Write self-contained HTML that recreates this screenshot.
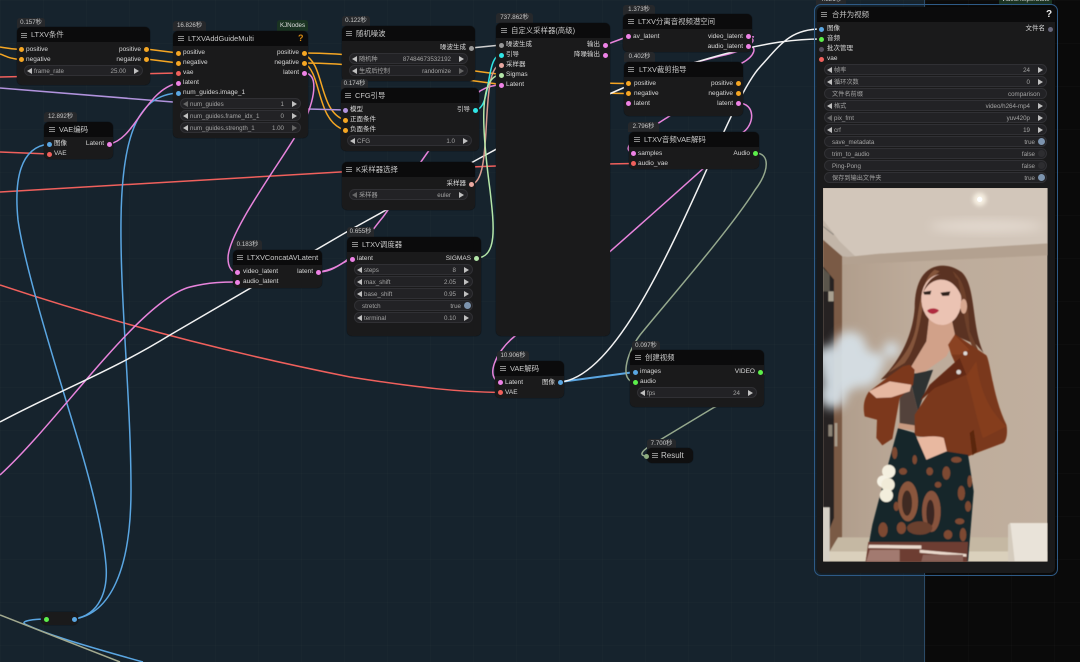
<!DOCTYPE html>
<html lang="zh"><head><meta charset="utf-8"><title>ComfyUI</title>
<style>
html,body{margin:0;padding:0;background:#16232d}
#p{position:relative;width:1080px;height:662px;overflow:hidden;background:#16232d;font-family:"Liberation Sans","Noto Sans CJK SC",sans-serif;color:#ddd;filter:blur(.3px)}
#g{position:absolute;inset:0;background-image:linear-gradient(rgba(255,255,255,.012) 1px,transparent 1px),linear-gradient(90deg,rgba(255,255,255,.012) 1px,transparent 1px);background-size:43px 43px}
#dk{position:absolute;left:924px;top:0;width:156px;height:662px;background:#0a0a0a;border-left:1px solid #2b4a66;box-sizing:border-box;background-image:linear-gradient(rgba(255,255,255,.015) 1px,transparent 1px),linear-gradient(90deg,rgba(255,255,255,.015) 1px,transparent 1px);background-size:43px 43px}
svg.wires{position:absolute;left:0;top:0}
svg.wires path{fill:none}
.n{position:absolute;background:#1a1a1b;border-radius:5px;box-shadow:0 0 1px #000}
.h{position:absolute;left:0;right:0;top:0;height:15px;background:#0b0b0c;border-radius:5px 5px 0 0}
.t{position:absolute;font-size:7.4px;line-height:15px;color:#c8c8c8;white-space:nowrap}
.m{position:absolute;width:6px;height:1px;background:#8a8a8a;box-shadow:0 2px #8a8a8a,0 4px #8a8a8a}
.b{position:absolute;background:#26282b;border-radius:3px 3px 0 0;font-size:6.2px;line-height:10px;color:#c8c8c8;text-align:center;white-space:nowrap}
.d{position:absolute;width:5px;height:5px;border-radius:50%;margin:-2.5px 0 0 -2.5px}
.l,.r{position:absolute;font-size:6.5px;line-height:10px;margin-top:-5px;color:#d8d8d8;white-space:nowrap}
.w{position:absolute;height:11px;box-sizing:border-box;background:#222225;border:1px solid #303034;border-radius:6px;font-size:6.2px;line-height:9px;color:#a4a4a4;white-space:nowrap}
.w .a{position:absolute;left:9px;top:.5px}.w .v{position:absolute;right:16px;top:.5px}.w .v0{position:absolute;right:6px;top:.5px}.w .a0{position:absolute;left:7px;top:.5px}
.w u,.w s{position:absolute;top:1.5px;width:0;height:0;border-top:3px solid transparent;border-bottom:3px solid transparent}
.w u{left:2px;border-right:5px solid #c0c0c0}.w s{right:3px;border-left:5px solid #c0c0c0}
.w u.o{border-right-color:#666}.w s.o{border-left-color:#666}
.w em{position:absolute;right:1px;top:1px;width:7px;height:7px;border-radius:50%;background:#7c93ad}
.w em.f{background:#2d2d30}
.w .v1{position:absolute;right:11px;top:.5px}
</style></head><body><div id="p">
<div id="g"></div><div id="dk"></div>

<svg class="wires" width="1080" height="662" viewBox="0 0 1080 662" stroke-width="1.5">
<g stroke="#f5a623">
<path d="M0 47 C6 48 10 49 21 49.5"/><path d="M0 54 C6 56 10 59 21 59.5"/>
<path d="M146 49 L178 53"/><path d="M146 59 L178 63"/>
<path d="M304 53 C400 53 500 83 628 83.5"/><path d="M304 63 C400 63 500 93 628 93.5"/>
<path d="M304 55 C325 62 318 112 345 120"/><path d="M304 63 C322 72 316 122 345 130"/>
</g>
<path d="M0 88 L173 102 L308 109 L345 110" stroke="#b193dd"/>
<g stroke="#f0605c">
<path d="M0 77 L178 73"/><path d="M0 152 L49 154"/><path d="M0 192 L340 172 L496 166 L633 163.5"/>
<path d="M0 285 C120 325 240 355 350 377 C420 388 460 392 500 392.5"/>
</g>
<g stroke="#5aa6e2">
<path d="M74 619 C100 615 108 590 106 565 C103 530 90 480 78 440 C60 380 25 270 18 220 C14 180 20 147 49 144"/>
<path d="M74 619 C110 614 131 570 131 490 C131 400 120 300 121 220 C122 130 140 95 178 93"/>
<path d="M46 619 C34 619 20 621 25 624 C50 636 100 650 143 662"/>
<path d="M560 382 L635 372" stroke-width="2"/>
</g>
<path d="M0 615 L120 662" stroke="#a2a98f"/>
<g stroke="#e884dc">
<path d="M109 144 C135 140 145 90 178 83"/>
<path d="M304 73 C318 73 316 95 305 120 C290 150 228 230 228 258 C228 268 232 272 237 272"/>
<path d="M0 475 C60 420 140 300 190 287 C210 282 225 282 237 282"/>
<path d="M318 272 C350 268 360 245 383 217 C410 180 445 120 480 91 C488 86 495 85 501 85"/>
<path d="M318 272 C335 272 340 262 352 259"/>
<path d="M605 45 L628 36.5"/><path d="M748 36 L754 37"/>
<path d="M748 46 C758 46 755 56 742 63 C700 92 690 102 668 117 C640 135 618 148 633 153"/>
<path d="M748 38 C760 38 750 50 720 56 L693 63"/>
<path d="M738 103 C756 103 755 125 742 133 C720 155 600 260 515 336 C495 352 485 378 500 382"/>
</g>
<g stroke="#f2f2f2">
<path d="M0 422 C60 390 110 372 170 335 L350 230 L480 158 C540 125 590 102 623 88 C680 65 740 48 780 42 C795 40 810 39 821 39"/>
<path d="M560 382 C640 375 720 110 760 67 C780 45 790 29 821 29"/>
</g>
<path d="M755 153 C770 153 770 170 755 190 C730 230 660 310 640 335 C625 355 620 382 635 382" stroke="#95a88d"/>
<path d="M760 372 C770 372 760 385 713 408 L650 446 C640 452 640 456 646 456" stroke="#95a88d"/>
<path d="M475 110 C492 110 485 55 501 55" stroke="#30e6e6"/>
<path d="M471 184 C495 184 478 65 501 65" stroke="#d99a8f"/>
<path d="M476 258 C498 258 494 225 490 190 C482 130 478 75 501 75" stroke="#b4e6a8"/>
<path d="M471 48 L501 45" stroke="#cfcfcf"/>
</svg>

<!-- LTXV条件 -->
<div class="b" style="left:17px;top:18px;width:28px;height:10px">0.157秒</div>
<div class="n" style="left:17px;top:27px;width:133px;height:58px"><div class="h"></div></div>
<div class="m" style="left:21px;top:33px"></div><div class="t" style="left:31px;top:27px">LTXV条件</div>
<i class="d" style="left:21px;top:49.5px;background:#f5a623"></i><i class="d" style="left:21px;top:59.5px;background:#f5a623"></i>
<i class="d" style="left:146px;top:49.5px;background:#f5a623"></i><i class="d" style="left:146px;top:59.5px;background:#f5a623"></i>
<span class="l" style="left:26px;top:49.5px">positive</span><span class="l" style="left:26px;top:59.5px">negative</span>
<span class="r" style="right:939px;top:49.5px">positive</span><span class="r" style="right:939px;top:59.5px">negative</span>
<div class="w" style="left:24px;top:65px;width:119px"><u></u><span class="a">frame_rate</span><span class="v">25.00</span><s></s></div>

<!-- KJNodes -->
<div style="position:absolute;left:277px;top:20px;width:31px;height:11px;background:#1a3322;border-radius:3px 3px 0 0;font-size:6.2px;line-height:11px;text-align:center;color:#ddd">KJNodes</div>
<div class="b" style="left:173px;top:21px;width:33px;height:10px">16.826秒</div>
<div class="n" style="left:173px;top:31px;width:135px;height:107px"><div class="h"></div></div>
<div class="m" style="left:178px;top:36px"></div><div class="t" style="left:188px;top:31px">LTXVAddGuideMulti</div>
<div style="position:absolute;left:298px;top:33px;font-size:9px;line-height:11px;font-weight:bold;color:#d98a10">?</div>
<i class="d" style="left:178px;top:53px;background:#f5a623"></i><i class="d" style="left:178px;top:63px;background:#f5a623"></i><i class="d" style="left:178px;top:73px;background:#f0605c"></i><i class="d" style="left:178px;top:83px;background:#ee82e6"></i><i class="d" style="left:178px;top:93px;background:#5aa6e2"></i>
<i class="d" style="left:304px;top:53px;background:#f5a623"></i><i class="d" style="left:304px;top:63px;background:#f5a623"></i><i class="d" style="left:304px;top:73px;background:#ee82e6"></i>
<span class="l" style="left:183px;top:53px">positive</span><span class="l" style="left:183px;top:63px">negative</span><span class="l" style="left:183px;top:73px">vae</span><span class="l" style="left:183px;top:83px">latent</span><span class="l" style="left:183px;top:93px">num_guides.image_1</span>
<span class="r" style="right:781px;top:53px">positive</span><span class="r" style="right:781px;top:63px">negative</span><span class="r" style="right:781px;top:73px">latent</span>
<div class="w" style="left:180px;top:98px;width:121px"><u class="o"></u><span class="a">num_guides</span><span class="v">1</span><s></s></div>
<div class="w" style="left:180px;top:110px;width:121px"><u></u><span class="a">num_guides.frame_idx_1</span><span class="v">0</span><s></s></div>
<div class="w" style="left:180px;top:122px;width:121px"><u></u><span class="a">num_guides.strength_1</span><span class="v">1.00</span><s class="o"></s></div>

<!-- VAE编码 -->
<div class="b" style="left:44px;top:112px;width:33px;height:10px">12.892秒</div>
<div class="n" style="left:44px;top:122px;width:69px;height:37px"><div class="h"></div></div>
<div class="m" style="left:49px;top:127px"></div><div class="t" style="left:59px;top:122px">VAE编码</div>
<i class="d" style="left:49px;top:144px;background:#5aa6e2"></i><i class="d" style="left:49px;top:154px;background:#f0605c"></i><i class="d" style="left:109px;top:144px;background:#ee82e6"></i>
<span class="l" style="left:54px;top:144px">图像</span><span class="l" style="left:54px;top:154px">VAE</span><span class="r" style="right:976px;top:144px">Latent</span>

<!-- 随机噪波 -->
<div class="b" style="left:342px;top:16px;width:28px;height:10px">0.122秒</div>
<div class="n" style="left:342px;top:26px;width:133px;height:55px"><div class="h"></div></div>
<div class="m" style="left:346px;top:31px"></div><div class="t" style="left:356px;top:26px">随机噪波</div>
<i class="d" style="left:471px;top:48px;background:#999"></i><span class="r" style="right:614px;top:48px">噪波生成</span>
<div class="w" style="left:349px;top:53px;width:119px"><u></u><span class="a">随机种</span><span class="v">87484673532192</span><s></s></div>
<div class="w" style="left:349px;top:65px;width:119px"><u></u><span class="a">生成后控制</span><span class="v">randomize</span><s class="o"></s></div>

<!-- CFG引导 -->
<div class="b" style="left:341px;top:79px;width:27px;height:10px">0.174秒</div>
<div class="n" style="left:341px;top:88px;width:138px;height:63px"><div class="h"></div></div>
<div class="m" style="left:345px;top:93px"></div><div class="t" style="left:355px;top:88px">CFG引导</div>
<i class="d" style="left:345px;top:110px;background:#b193dd"></i><i class="d" style="left:345px;top:120px;background:#f5a623"></i><i class="d" style="left:345px;top:130px;background:#f5a623"></i><i class="d" style="left:475px;top:110px;background:#30e6e6"></i>
<span class="l" style="left:350px;top:110px">模型</span><span class="l" style="left:350px;top:120px">正面条件</span><span class="l" style="left:350px;top:130px">负面条件</span><span class="r" style="right:610px;top:110px">引导</span>
<div class="w" style="left:347px;top:135px;width:125px"><u></u><span class="a">CFG</span><span class="v">1.0</span><s></s></div>

<!-- K采样器选择 -->
<div class="n" style="left:342px;top:162px;width:133px;height:48px"><div class="h"></div></div>
<div class="m" style="left:346px;top:167px"></div><div class="t" style="left:356px;top:162px">K采样器选择</div>
<i class="d" style="left:471px;top:184px;background:#e8a8a0"></i><span class="r" style="right:614px;top:184px">采样器</span>
<div class="w" style="left:349px;top:189px;width:119px"><u class="o"></u><span class="a">采样器</span><span class="v">euler</span><s></s></div>

<!-- LTXV调度器 -->
<div class="b" style="left:347px;top:227px;width:27px;height:10px">0.655秒</div>
<div class="n" style="left:347px;top:237px;width:134px;height:99px"><div class="h"></div></div>
<div class="m" style="left:352px;top:242px"></div><div class="t" style="left:362px;top:237px">LTXV调度器</div>
<i class="d" style="left:352px;top:259px;background:#ee82e6"></i><i class="d" style="left:476px;top:258px;background:#b4e6a8"></i>
<span class="l" style="left:357px;top:259px">latent</span><span class="r" style="right:609px;top:259px">SIGMAS</span>
<div class="w" style="left:354px;top:264px;width:119px"><u></u><span class="a">steps</span><span class="v">8</span><s></s></div>
<div class="w" style="left:354px;top:276px;width:119px"><u></u><span class="a">max_shift</span><span class="v">2.05</span><s></s></div>
<div class="w" style="left:354px;top:288px;width:119px"><u></u><span class="a">base_shift</span><span class="v">0.95</span><s></s></div>
<div class="w" style="left:354px;top:300px;width:119px"><span class="a0">stretch</span><span class="v1">true</span><em></em></div>
<div class="w" style="left:354px;top:312px;width:119px"><u></u><span class="a">terminal</span><span class="v">0.10</span><s></s></div>

<!-- 自定义采样器 -->
<div class="b" style="left:496px;top:13px;width:37px;height:10px">737.862秒</div>
<div class="n" style="left:496px;top:23px;width:114px;height:313px"><div class="h"></div></div>
<div class="m" style="left:501px;top:28px"></div><div class="t" style="left:511px;top:23px">自定义采样器(高级)</div>
<i class="d" style="left:501px;top:45px;background:#999"></i><i class="d" style="left:501px;top:55px;background:#30e6e6"></i><i class="d" style="left:501px;top:65px;background:#e8a8a0"></i><i class="d" style="left:501px;top:75px;background:#b4e6a8"></i><i class="d" style="left:501px;top:85px;background:#ee82e6"></i>
<i class="d" style="left:605px;top:45px;background:#ee82e6"></i><i class="d" style="left:605px;top:55px;background:#ee82e6"></i>
<span class="l" style="left:506px;top:45px">噪波生成</span><span class="l" style="left:506px;top:55px">引导</span><span class="l" style="left:506px;top:65px">采样器</span><span class="l" style="left:506px;top:75px">Sigmas</span><span class="l" style="left:506px;top:85px">Latent</span>
<span class="r" style="right:480px;top:45px">输出</span><span class="r" style="right:480px;top:55px">降噪输出</span>

<!-- LTXV分离 -->
<div class="b" style="left:623px;top:5px;width:32px;height:10px">1.373秒</div>
<div class="n" style="left:623px;top:14px;width:129px;height:38px"><div class="h"></div></div>
<div class="m" style="left:628px;top:19px"></div><div class="t" style="left:638px;top:14px">LTXV分离音视频潜空间</div>
<i class="d" style="left:628px;top:36.5px;background:#ee82e6"></i><i class="d" style="left:748px;top:36.5px;background:#ee82e6"></i><i class="d" style="left:748px;top:46.5px;background:#ee82e6"></i>
<span class="l" style="left:633px;top:36.5px">av_latent</span><span class="r" style="right:337px;top:36.5px">video_latent</span><span class="r" style="right:337px;top:46.5px">audio_latent</span>

<!-- LTXV裁剪指导 -->
<div class="b" style="left:624px;top:52px;width:31px;height:10px">0.402秒</div>
<div class="n" style="left:624px;top:62px;width:119px;height:54px"><div class="h"></div></div>
<div class="m" style="left:628px;top:67px"></div><div class="t" style="left:639px;top:62px">LTXV裁剪指导</div>
<i class="d" style="left:628px;top:83.5px;background:#f5a623"></i><i class="d" style="left:628px;top:93.5px;background:#f5a623"></i><i class="d" style="left:628px;top:103.5px;background:#ee82e6"></i>
<i class="d" style="left:738px;top:83.5px;background:#f5a623"></i><i class="d" style="left:738px;top:93.5px;background:#f5a623"></i><i class="d" style="left:738px;top:103.5px;background:#ee82e6"></i>
<span class="l" style="left:634px;top:83.5px">positive</span><span class="l" style="left:634px;top:93.5px">negative</span><span class="l" style="left:634px;top:103.5px">latent</span>
<span class="r" style="right:347px;top:83.5px">positive</span><span class="r" style="right:347px;top:93.5px">negative</span><span class="r" style="right:347px;top:103.5px">latent</span>

<!-- LTXV音频VAE解码 -->
<div class="b" style="left:628px;top:122px;width:31px;height:10px">2.796秒</div>
<div class="n" style="left:629px;top:132px;width:130px;height:37px"><div class="h"></div></div>
<div class="m" style="left:634px;top:137px"></div><div class="t" style="left:644px;top:132px">LTXV音频VAE解码</div>
<i class="d" style="left:633px;top:153.5px;background:#ee82e6"></i><i class="d" style="left:633px;top:163.5px;background:#f0605c"></i><i class="d" style="left:755px;top:153.5px;background:#5cef4a"></i>
<span class="l" style="left:638px;top:153.5px">samples</span><span class="l" style="left:638px;top:163.5px">audio_vae</span><span class="r" style="right:330px;top:153.5px">Audio</span>

<!-- Concat -->
<div class="b" style="left:233px;top:240px;width:29px;height:10px">0.183秒</div>
<div class="n" style="left:233px;top:250px;width:89px;height:38px"><div class="h"></div></div>
<div class="m" style="left:237px;top:255px"></div><div class="t" style="left:247px;top:250px">LTXVConcatAVLatent</div>
<i class="d" style="left:237px;top:272px;background:#ee82e6"></i><i class="d" style="left:237px;top:282px;background:#ee82e6"></i><i class="d" style="left:318px;top:272px;background:#ee82e6"></i>
<span class="l" style="left:243px;top:272px">video_latent</span><span class="l" style="left:243px;top:282px">audio_latent</span><span class="r" style="right:767px;top:272px">latent</span>

<!-- VAE解码 -->
<div class="b" style="left:497px;top:351px;width:32px;height:10px">10.906秒</div>
<div class="n" style="left:495px;top:361px;width:69px;height:37px"><div class="h"></div></div>
<div class="m" style="left:500px;top:366px"></div><div class="t" style="left:510px;top:361px">VAE解码</div>
<i class="d" style="left:500px;top:382.5px;background:#ee82e6"></i><i class="d" style="left:500px;top:392.5px;background:#f0605c"></i><i class="d" style="left:560px;top:382.5px;background:#5aa6e2"></i>
<span class="l" style="left:505px;top:382.5px">Latent</span><span class="l" style="left:505px;top:392.5px">VAE</span><span class="r" style="right:525px;top:382.5px">图像</span>

<!-- 创建视频 -->
<div class="b" style="left:632px;top:341px;width:28px;height:10px">0.097秒</div>
<div class="n" style="left:630px;top:350px;width:134px;height:57px"><div class="h"></div></div>
<div class="m" style="left:635px;top:355px"></div><div class="t" style="left:645px;top:350px">创建视频</div>
<i class="d" style="left:635px;top:372px;background:#5aa6e2"></i><i class="d" style="left:635px;top:382px;background:#5cef4a"></i><i class="d" style="left:760px;top:372px;background:#5cef4a"></i>
<span class="l" style="left:640px;top:372px">images</span><span class="l" style="left:640px;top:382px">audio</span><span class="r" style="right:325px;top:372px">VIDEO</span>
<div class="w" style="left:637px;top:387px;width:120px"><u></u><span class="a">fps</span><span class="v">24</span><s></s></div>

<!-- Result -->
<div class="b" style="left:647px;top:439px;width:29px;height:10px">7.700秒</div>
<div class="n" style="left:647px;top:448px;width:46px;height:15px;background:#0f0f10"></div>
<div class="m" style="left:652px;top:453px"></div><div class="t" style="left:661px;top:448px;font-size:8px">Result</div>
<i class="d" style="left:646px;top:456px;background:#8cab7e"></i>

<!-- small reroute -->
<div class="n" style="left:41px;top:612px;width:37px;height:13px"></div>
<i class="d" style="left:46px;top:619px;background:#5cef4a"></i><i class="d" style="left:74px;top:619px;background:#5aa6e2"></i>

<!-- 合并为视频 -->
<div class="b" style="left:816px;top:-5px;width:30px;height:10px">4.321秒</div>
<div style="position:absolute;left:999px;top:-7px;width:53px;height:11px;background:#1a3322;font-size:6.2px;line-height:13px;color:#ddd;text-align:center">VideoHelperSuite</div>
<div style="position:absolute;left:814px;top:4px;width:244px;height:572px;box-sizing:border-box;border:1px solid #2e5a86;border-radius:7px"></div>
<div class="n" style="left:817px;top:7px;width:238px;height:566px"><div class="h"></div></div>
<div class="m" style="left:821px;top:12px"></div><div class="t" style="left:832px;top:7px">合并为视频</div>
<div style="position:absolute;left:1046px;top:9px;font-size:10px;line-height:11px;font-weight:bold;color:#eee">?</div>
<i class="d" style="left:821.5px;top:29px;background:#5aa6e2"></i><i class="d" style="left:821.5px;top:39px;background:#5cef4a"></i><i class="d" style="left:821.5px;top:49px;background:#55505f"></i><i class="d" style="left:821.5px;top:59px;background:#f0605c"></i><i class="d" style="left:1050px;top:29px;background:#66667a"></i>
<span class="l" style="left:827px;top:29px">图像</span><span class="l" style="left:827px;top:39px">音频</span><span class="l" style="left:827px;top:49px">批次管理</span><span class="l" style="left:827px;top:59px">vae</span><span class="r" style="right:35px;top:29px">文件名</span>
<div class="w" style="left:824px;top:64px;width:223px"><u></u><span class="a">帧率</span><span class="v">24</span><s></s></div>
<div class="w" style="left:824px;top:76px;width:223px"><u></u><span class="a">循环次数</span><span class="v">0</span><s></s></div>
<div class="w" style="left:824px;top:88px;width:223px"><span class="a0">文件名前缀</span><span class="v0">comparison</span></div>
<div class="w" style="left:824px;top:100px;width:223px"><u></u><span class="a">格式</span><span class="v">video/h264-mp4</span><s></s></div>
<div class="w" style="left:824px;top:112px;width:223px"><u class="o"></u><span class="a">pix_fmt</span><span class="v">yuv420p</span><s></s></div>
<div class="w" style="left:824px;top:124px;width:223px"><u></u><span class="a">crf</span><span class="v">19</span><s></s></div>
<div class="w" style="left:824px;top:136px;width:223px"><span class="a0">save_metadata</span><span class="v1">true</span><em></em></div>
<div class="w" style="left:824px;top:148px;width:223px"><span class="a0">trim_to_audio</span><span class="v1">false</span><em class="f"></em></div>
<div class="w" style="left:824px;top:160px;width:223px"><span class="a0">Ping-Pong</span><span class="v1">false</span><em class="f"></em></div>
<div class="w" style="left:824px;top:172px;width:223px"><span class="a0">保存到输出文件夹</span><span class="v1">true</span><em></em></div>

<!-- picture -->
<svg style="position:absolute;left:823.33px;top:188.33px" width="224.4" height="373.4" viewBox="10 10 673 1120">
<defs>
<filter id="s1"><feGaussianBlur stdDeviation="1.6"/></filter>
<filter id="s2" x="-40%" y="-40%" width="180%" height="180%"><feGaussianBlur stdDeviation="15"/></filter>
<filter id="s3" x="-50%" y="-50%" width="200%" height="200%"><feGaussianBlur stdDeviation="6"/></filter>
<linearGradient id="wall" x1="0" x2="1" y1="0" y2="0"><stop offset="0" stop-color="#ad9a88"/><stop offset=".4" stop-color="#bdab9a"/><stop offset="1" stop-color="#c0af9e"/></linearGradient>
</defs>
<rect x="10" y="10" width="673" height="1120" fill="url(#wall)"/>
<g filter="url(#s1)">
<path d="M10 10H683V178L170 208 110 218 70 215 10 165Z" fill="#d2c6ba"/>
<path d="M10 105 60 170 110 218 70 215 10 165Z" fill="#c2b5a8"/>
<path d="M70 218 170 208 683 176V212L70 240Z" fill="#b3a190"/>
<path d="M10 165 67 215V1060L22 1110 10 1130Z" fill="#7a5a44"/>
<path d="M10 245 43 285V1000L25 1045H10Z" fill="#282420"/>
<path d="M10 250 30 270V320H10Z" fill="#5a554c"/>
<rect x="26" y="320" width="16" height="30" fill="#a8a090"/>
<rect x="26" y="720" width="12" height="35" fill="#8a8274"/>
<rect x="45" y="715" width="8" height="70" fill="#a89c8c"/>
<path d="M55 1058H570V1100H30Z" fill="#c5b8a3"/>
<path d="M20 1100H683V1130H14Z" fill="#dad0bc"/>
<path d="M570 1015H683V1130H565Z" fill="#e9e3d9"/>
<path d="M565 1020 572 1015 585 1130H565Z" fill="#d4cbbd"/>
<rect x="10" y="968" width="20" height="162" fill="#d6d0c6"/>
<path d="M10 125 42 150" stroke="#8e8880" stroke-width="3"/>
</g>
<ellipse cx="500" cy="125" rx="170" ry="18" fill="#e3d9cf" filter="url(#s2)"/>
<ellipse cx="480" cy="44" rx="20" ry="20" fill="#f7f0e2" filter="url(#s3)"/>
<circle cx="480" cy="44" r="8" fill="#fff"/>
<g filter="url(#s2)" fill="#d6e0e6" opacity=".95">
<circle cx="90" cy="490" r="50"/><circle cx="65" cy="560" r="65"/><circle cx="125" cy="550" r="58"/><circle cx="40" cy="630" r="42"/><circle cx="215" cy="495" r="24"/><circle cx="170" cy="530" r="26"/><circle cx="25" cy="520" r="36"/>
</g>
<g filter="url(#s1)">
<path d="M370 243C315 243 285 290 285 370 280 440 250 520 183 585L260 565 400 450 470 480 492 505C455 430 470 300 425 262 405 248 385 243 370 243Z" fill="#5a3323"/>
<path d="M345 255C310 280 300 350 290 420 280 480 250 520 205 565L255 535C290 490 300 420 310 360 315 320 325 285 360 260Z" fill="#84543a"/>
<path d="M400 260C440 290 445 360 450 440L475 495 460 490C430 430 430 320 400 262Z" fill="#6d412b"/>
<path d="M440 680 462 700 440 725 428 700Z" fill="#6a4630"/>
<path d="M328 400 395 400 408 460 380 515 295 575 275 545 320 470Z" fill="#d1a189"/>
<path d="M268 570 340 555 295 680 285 640Z" fill="#2f3030"/>
<path d="M240 640 275 600 295 680 285 730 240 720Z" fill="#53423a"/>
<path d="M238 715 285 722 285 738 235 730Z" fill="#c89a80"/>
<ellipse cx="365" cy="345" rx="60" ry="76" fill="#ebc3b3" transform="rotate(-4 365 345)"/>
<path d="M310 325C335 270 400 270 425 335L415 285C390 255 330 258 310 325Z" fill="#5a3323"/>
<ellipse cx="432" cy="365" rx="10" ry="22" fill="#d8a890"/>
<path d="M310 322 335 318 332 330 314 330Z" fill="#2e201c"/><path d="M362 324 392 320 388 333 368 334Z" fill="#2e201c"/>
<path d="M322 378C332 368 352 370 358 378 345 392 330 390 322 378Z" fill="#b02c3f"/>
<path d="M405 448 500 512C512 530 520 640 560 720 565 745 560 770 550 775L470 805 445 815 382 805 372 762C340 755 310 760 285 752L285 690 340 605 420 565 395 510Z" fill="#7a371b"/>
<path d="M270 540 250 545C205 575 165 610 148 620 135 640 128 660 135 695L172 705 170 760 188 782 218 762 240 640 280 600 285 555Z" fill="#7c381b"/>
<path d="M405 450 450 495 420 510 395 510 385 480Z" fill="#8a4220"/>
<path d="M420 520 330 600 300 650 345 610 440 570Z" fill="#642c15"/>
<path d="M470 530C480 620 510 680 560 725L490 760C470 700 455 620 440 575Z" fill="#853e1e"/>
<path d="M462 735 472 800 458 812 450 745Z" fill="#5a2810"/>
<path d="M148 620 210 590 275 600 270 620 215 638 170 640Z" fill="#e6b7a0"/>
<path d="M250 775C285 755 350 750 372 760L382 802 320 828 260 795Z" fill="#e8b8a0"/>
<circle cx="437" cy="506" r="6" fill="#e0dcd8"/><circle cx="417" cy="562" r="7" fill="#d9d4d0"/>
<path d="M235 730 285 745 320 825 380 800 445 810 462 920 445 1130H138L158 1020 205 840Z" fill="#14262a"/>
<g fill="#7d4a32">
<ellipse cx="380" cy="865" rx="12" ry="20"/><ellipse cx="425" cy="925" rx="11" ry="22"/><ellipse cx="450" cy="890" rx="7" ry="18"/><ellipse cx="410" cy="825" rx="16" ry="9"/><ellipse cx="250" cy="860" rx="12" ry="10"/><ellipse cx="225" cy="805" rx="8" ry="18"/><ellipse cx="355" cy="900" rx="10" ry="9"/><ellipse cx="445" cy="965" rx="9" ry="16"/><ellipse cx="190" cy="1035" rx="14" ry="22"/><ellipse cx="245" cy="1030" rx="14" ry="18"/><ellipse cx="420" cy="1010" rx="14" ry="9"/><ellipse cx="385" cy="1050" rx="13" ry="14"/><ellipse cx="430" cy="1050" rx="10" ry="20"/><ellipse cx="285" cy="825" rx="7" ry="14"/><ellipse cx="330" cy="860" rx="10" ry="12"/><ellipse cx="230" cy="965" rx="8" ry="14"/>
</g>
<ellipse cx="265" cy="950" rx="30" ry="60" fill="#8a563c"/><ellipse cx="262" cy="955" rx="15" ry="38" fill="#3f2c24"/>
<ellipse cx="335" cy="980" rx="28" ry="62" fill="#87533c"/><ellipse cx="332" cy="985" rx="12" ry="40" fill="#3a2820"/>
<ellipse cx="300" cy="1030" rx="38" ry="20" fill="#6a3f2e"/>
<path d="M146 1072 445 1072 442 1132H138Z" fill="#6d3c30"/>
<path d="M148 1080 305 1082V1092L146 1090Z" fill="#ead9cc"/><path d="M300 1095 440 1108V1116L300 1104Z" fill="#ead9cc"/>
<path d="M150 1095H240V1130H140Z" fill="#a27a6f"/><path d="M310 1110H430V1130H305Z" fill="#8a6258"/>
<circle cx="207" cy="860" r="20" fill="#f4efdf"/><circle cx="190" cy="890" r="18" fill="#f6f2e4"/><circle cx="205" cy="900" r="20" fill="#f1ebd8"/><circle cx="200" cy="932" r="20" fill="#f3eedc"/>
</g>
</svg>
</div></body></html>
